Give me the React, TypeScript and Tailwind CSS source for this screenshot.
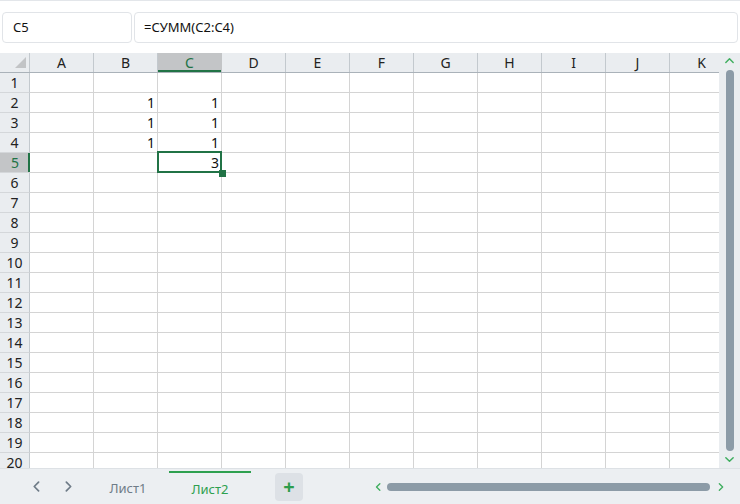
import React from 'react';

const COLS = ['A', 'B', 'C', 'D', 'E', 'F', 'G', 'H', 'I', 'J', 'K'];
const ROWS = Array.from({ length: 20 }, (_, i) => i + 1);

const values: Record<string, string> = {
  B2: '1',
  C2: '1',
  B3: '1',
  C3: '1',
  B4: '1',
  C4: '1',
  C5: '3',
};

const Chevron = ({ dir, className }: { dir: 'up' | 'down' | 'left' | 'right'; className?: string }) => {
  const pts = {
    up: '2,7 6,3 10,7',
    down: '2,4 6,8 10,4',
    left: '7,2 3,6 7,10',
    right: '4,2 8,6 4,10',
  }[dir];
  return (
    <svg viewBox="0 0 12 12" className={className} fill="none" stroke="currentColor" strokeWidth="1.6" strokeLinecap="round" strokeLinejoin="round">
      <polyline points={pts} />
    </svg>
  );
};

const HeaderRow = () => (
  <div className="flex h-[20px] shrink-0 bg-[#eaedf0] border-b border-[#aab2b9]">
    <div className="relative w-[30px] shrink-0 border-r border-[#c3c9ce]">
      <div className="absolute right-[3px] bottom-[4px] w-0 h-0 border-l-[11px] border-l-transparent border-b-[11px] border-b-[#c2c4c6]" />
    </div>
    {COLS.map(c => {
      const active = c === 'C';
      return (
        <div
          key={c}
          className={`w-[64px] shrink-0 flex items-center justify-center border-r ${
            active
              ? 'bg-[#c3c5c7] text-[#217346] border-[#c3c5c7] shadow-[inset_0_-2px_0_#217346]'
              : 'text-[#222] border-[#c3c9ce]'
          }`}
        >
          {c}
        </div>
      );
    })}
  </div>
);

const Row = ({ n }: { n: number }) => {
  const activeRow = n === 5;
  return (
    <div className="flex h-[20px] shrink-0">
      <div
        className={`w-[30px] shrink-0 flex items-center justify-center border-b border-[#d4d7da] ${
          activeRow
            ? 'bg-[#c3c5c7] text-[#217346] shadow-[inset_-2px_0_0_#217346]'
            : 'bg-[#eaedf0] text-[#222] border-r border-r-[#c3c9ce]'
        }`}
      >
        {n}
      </div>
      {COLS.map(c => {
        const id = `${c}${n}`;
        const selected = id === 'C5';
        return (
          <div
            key={c}
            className="relative w-[64px] shrink-0 border-r border-b border-[#d4d4d4] flex items-center justify-end pr-[2px] text-[#111]"
          >
            {values[id]}
            {selected && (
              <div className="absolute z-10 left-[-1px] top-[-2px] right-[-1px] bottom-[-1px] border-2 border-[#217346]">
                <div className="absolute right-[-6px] bottom-[-6px] w-[7px] h-[7px] bg-[#217346]" />
              </div>
            )}
          </div>
        );
      })}
    </div>
  );
};

export default function App() {
  return (
    <div className="w-[740px] h-[504px] flex flex-col overflow-hidden bg-white text-[14px] leading-none font-['Noto_Sans',sans-serif]">
      {/* formula bar */}
      <div className="h-[53px] shrink-0 flex items-start gap-[2px] pt-[11px] px-[2px] border-t border-[#e3e6ea] text-[13px]">
        <div className="w-[130px] h-[31px] rounded-[4px] border border-[#e1e4e8] flex items-center pl-[10px] text-[#111]">
          C5
        </div>
        <div className="flex-1 h-[31px] rounded-[4px] border border-[#e1e4e8] flex items-center pl-[9px] text-[#111]">
          =СУММ(C2:C4)
        </div>
      </div>

      {/* grid + vertical scroll */}
      <div className="flex-1 flex min-h-0">
        <div className="w-[719px] shrink-0 flex flex-col overflow-hidden">
          <HeaderRow />
          {ROWS.map(n => (
            <Row key={n} n={n} />
          ))}
        </div>
        <div className="flex-1 bg-[#eaedf0] flex flex-col items-center">
          <div className="h-[17px] flex items-center justify-center text-[#3fae5f]">
            <Chevron dir="up" className="w-[11px] h-[11px]" />
          </div>
          <div className="w-[8px] h-[381px] rounded-full bg-[#8c9ba7]" />
          <div className="flex-1 flex items-center justify-center text-[#3fae5f]">
            <Chevron dir="down" className="w-[11px] h-[11px]" />
          </div>
        </div>
      </div>

      {/* sheet tabs */}
      <div className="h-[36px] shrink-0 flex bg-[#eceff2] border-t border-[#dde1e5] text-[13px]">
        <div className="flex items-center pl-[22px]">
          <button className="w-[31px] h-[28px] flex items-center justify-center text-[#6f7c88]">
            <Chevron dir="left" className="w-[13px] h-[13px]" />
          </button>
          <button className="w-[31px] h-[28px] flex items-center justify-center text-[#6f7c88]">
            <Chevron dir="right" className="w-[13px] h-[13px]" />
          </button>
        </div>
        <div className="ml-[3px] w-[82px] flex items-center justify-center pt-[3px] text-[#6f7c88]">Лист1</div>
        <div className="mt-[2px] w-[82px] border-t-2 border-[#2ea04f] flex items-center justify-center pt-[1px] text-[#2ea04f]">
          Лист2
        </div>
        <div className="ml-[24px] self-center w-[28px] h-[28px] rounded-[4px] bg-[#dde1e6] flex items-center justify-center text-[#2e9d4c] text-[20px] font-bold leading-none">
          +
        </div>
        <div className="ml-auto w-[370px] flex items-center">
          <div className="w-[17px] flex justify-center text-[#3fae5f]">
            <Chevron dir="left" className="w-[10px] h-[10px]" />
          </div>
          <div className="w-[323px] h-[8px] rounded-full bg-[#8c9ba7]" />
          <div className="w-[21px] flex justify-center text-[#3fae5f]">
            <Chevron dir="right" className="w-[10px] h-[10px]" />
          </div>
        </div>
      </div>
    </div>
  );
}
